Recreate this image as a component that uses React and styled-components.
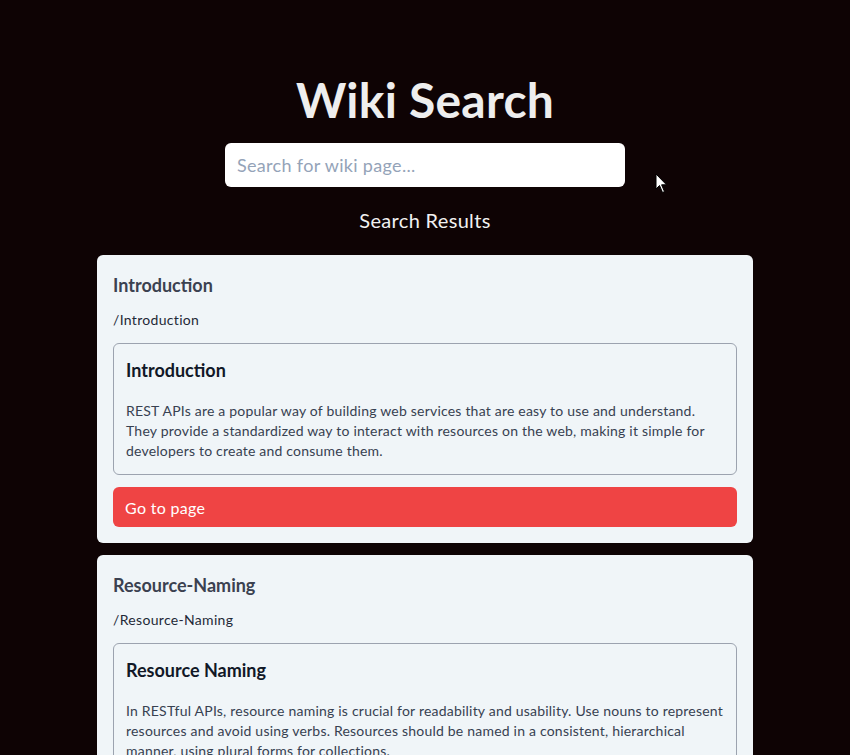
import React from 'react';
import styled, { createGlobalStyle } from 'styled-components';

const GlobalStyle = createGlobalStyle`
  html, body {
    margin: 0;
    padding: 0;
    background: #0e0304;
  }
  body {
    font-family: 'Lato', 'Open Sans', sans-serif;
    letter-spacing: 0.02em;
  }
  * {
    box-sizing: border-box;
  }
`;

const results = [
  {
    slug: 'Introduction',
    title: 'Introduction',
    body: 'REST APIs are a popular way of building web services that are easy to use and understand. They provide a standardized way to interact with resources on the web, making it simple for developers to create and consume them.',
  },
  {
    slug: 'Resource-Naming',
    title: 'Resource Naming',
    body: 'In RESTful APIs, resource naming is crucial for readability and usability. Use nouns to represent resources and avoid using verbs. Resources should be named in a consistent, hierarchical manner, using plural forms for collections.',
  },
];

const App = () => {
  return (
    <>
      <GlobalStyle />
      <StyledPage>
        <StyledTitle>Wiki Search</StyledTitle>
        <StyledSearchRow>
          <StyledInput type="text" placeholder="Search for wiki page..." aria-label="Search for wiki page" />
          <StyledCursor width="14" height="22" viewBox="0 0 14 22">
            <path d="M1 1 L1 16 L4.5 12.5 L7.5 19.5 L9.5 18.6 L6.6 11.8 L11.5 11.8 Z" fill="#fff" stroke="#000" strokeWidth="1" />
          </StyledCursor>
        </StyledSearchRow>
        <StyledSubtitle>Search Results</StyledSubtitle>
        <StyledList>
          {results.map((r) => (
            <StyledCard key={r.slug}>
              <StyledCardTitle>{r.slug}</StyledCardTitle>
              <StyledPath>/{r.slug}</StyledPath>
              <StyledPreview>
                <StyledPreviewTitle>{r.title}</StyledPreviewTitle>
                <StyledPreviewText>{r.body}</StyledPreviewText>
              </StyledPreview>
              <StyledButton>Go to page</StyledButton>
            </StyledCard>
          ))}
        </StyledList>
      </StyledPage>
    </>
  );
};

export default App;

const StyledPage = styled.main`
  display: flex;
  flex-direction: column;
  align-items: center;
  padding-top: 72px;
  min-height: 755px;
`;

const StyledTitle = styled.h1`
  margin: 0;
  font-size: 48px;
  line-height: 56px;
  font-weight: 700;
  letter-spacing: 0.005em;
  color: #eeeeee;
`;

const StyledSearchRow = styled.div`
  position: relative;
  margin-top: 15px;
`;

const StyledInput = styled.input`
  display: block;
  width: 400px;
  height: 44px;
  border: none;
  border-radius: 6px;
  background: #ffffff;
  padding: 0 12px;
  font-family: inherit;
  font-size: 18px;
  letter-spacing: inherit;
  color: #111827;
  outline: none;

  &::placeholder {
    color: #94a3b8;
  }
`;

const StyledCursor = styled.svg`
  position: absolute;
  left: 430px;
  top: 30px;
`;

const StyledSubtitle = styled.h2`
  margin: 19px 0 0;
  font-size: 20px;
  line-height: 28px;
  font-weight: 400;
  color: #f1f1f1;
`;

const StyledList = styled.div`
  display: flex;
  flex-direction: column;
  gap: 12px;
  width: 656px;
  margin-top: 21px;
`;

const StyledCard = styled.article`
  background: #f0f5f8;
  border-radius: 6px;
  padding: 16px;
  display: flex;
  flex-direction: column;
`;

const StyledCardTitle = styled.h3`
  margin: 0;
  font-size: 18px;
  line-height: 28px;
  font-weight: 700;
  letter-spacing: 0;
  color: #3b4150;
`;

const StyledPath = styled.p`
  margin: 11px 0 0;
  font-size: 14px;
  line-height: 20px;
  color: #1f2937;
`;

const StyledPreview = styled.div`
  margin-top: 13px;
  border: 1px solid #9ca3af;
  border-radius: 6px;
  padding: 12px 12px 13px;
`;

const StyledPreviewTitle = styled.h4`
  margin: 0;
  font-size: 18px;
  line-height: 28px;
  font-weight: 700;
  letter-spacing: 0;
  color: #111827;
`;

const StyledPreviewText = styled.p`
  margin: 17px 0 0;
  font-size: 14px;
  line-height: 20px;
  letter-spacing: 0.015em;
  color: #374151;
`;

const StyledButton = styled.button`
  margin-top: 12px;
  height: 40px;
  border: none;
  border-radius: 6px;
  background: #ef4444;
  color: #ffffff;
  font-family: inherit;
  font-size: 16px;
  letter-spacing: inherit;
  text-align: left;
  padding: 0 12px;
  cursor: pointer;
`;
